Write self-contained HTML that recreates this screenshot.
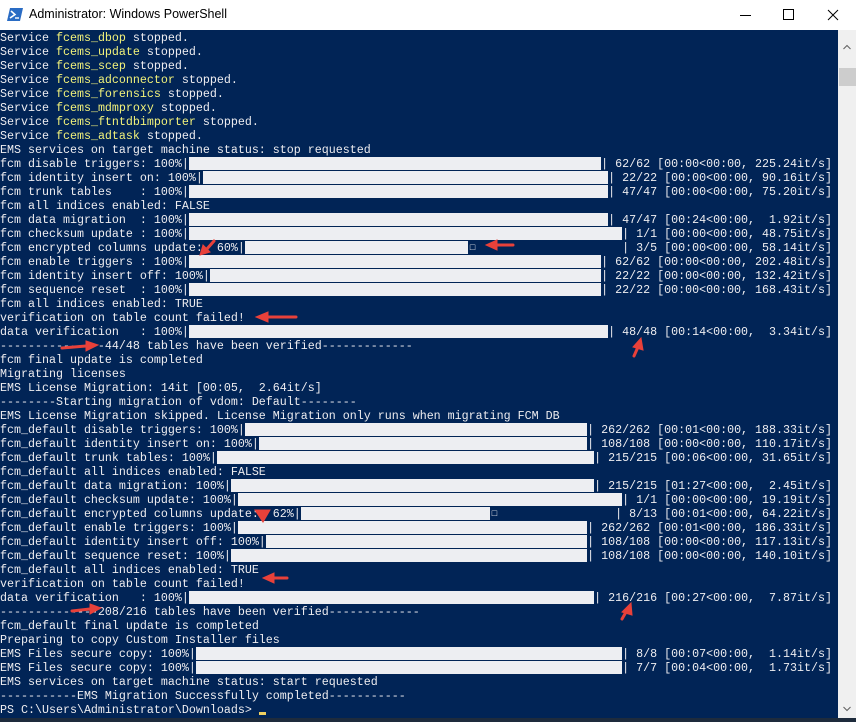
<!DOCTYPE html>
<html><head><meta charset="utf-8"><style>
*{margin:0;padding:0;box-sizing:border-box}
body{width:856px;height:722px;overflow:hidden;background:#fff;position:relative;font-family:"Liberation Mono",monospace}
.title{position:absolute;left:0;top:0;width:856px;height:30px;background:#fff;font-family:"Liberation Sans",sans-serif;font-size:12.5px;color:#000}
.title .t{position:absolute;left:29px;top:7px}
.con{position:absolute;left:0;top:30px;width:838px;height:688px;background:#012456}
.sb{position:absolute;left:838px;top:30px;width:18px;height:688px;background:#f0f0f0}
.ln{position:absolute;left:0;height:14px;width:832px;display:flex;font-size:11.67px;line-height:14px;color:#eeedf0;white-space:pre;margin-top:1px}
.y{color:#f2f27a}
.bar{flex:1;height:13px;background:#edeef2;margin-top:0}
.pbar{flex:1;height:13px;position:relative}
.pbar i{position:absolute;left:0;top:0;height:13px;background:#edeef2}
.bot{position:absolute;left:0;top:718px;width:856px;height:4px;background:#1e2b3c}
</style></head><body>
<div class="title">
<svg style="position:absolute;left:7px;top:8px" width="16" height="13" viewBox="0 0 16 13"><path d="M3 0H16L13 13H0Z" fill="#2a6cc4"/><path d="M4 3L8 6.5L3 10" stroke="#fff" stroke-width="1.6" fill="none"/><path d="M8 10H12" stroke="#fff" stroke-width="1.4"/></svg>
<span class="t">Administrator: Windows PowerShell</span>
<svg style="position:absolute;left:740px;top:8px" width="110" height="14"><path d="M0 7.5H11" stroke="#000"/><path d="M43.5 1.5H53.5V11.5H43.5Z" stroke="#000" fill="none"/><path d="M88 2L98 12M98 2L88 12" stroke="#000"/></svg>
</div>
<div class="con"></div>
<div class="sb">
<svg style="position:absolute;left:5px;top:14px" width="8" height="6"><path d="M0.5 5L4 1.5L7.5 5" stroke="#606060" fill="none"/></svg>
<div style="position:absolute;left:1px;top:38px;width:17px;height:18px;background:#cdcdcd"></div>
<svg style="position:absolute;left:5px;top:676px" width="8" height="6"><path d="M0.5 1L4 4.5L7.5 1" stroke="#606060" fill="none"/></svg>
</div>
<div class="bot"></div>

<div class="ln" style="top:30px">Service <span class="y">fcems_dbop</span> stopped.</div>
<div class="ln" style="top:44px">Service <span class="y">fcems_update</span> stopped.</div>
<div class="ln" style="top:58px">Service <span class="y">fcems_scep</span> stopped.</div>
<div class="ln" style="top:72px">Service <span class="y">fcems_adconnector</span> stopped.</div>
<div class="ln" style="top:86px">Service <span class="y">fcems_forensics</span> stopped.</div>
<div class="ln" style="top:100px">Service <span class="y">fcems_mdmproxy</span> stopped.</div>
<div class="ln" style="top:114px">Service <span class="y">fcems_ftntdbimporter</span> stopped.</div>
<div class="ln" style="top:128px">Service <span class="y">fcems_adtask</span> stopped.</div>
<div class="ln" style="top:142px">EMS services on target machine status: stop requested</div>
<div class="ln" style="top:156px"><span>fcm disable triggers: 100%|</span><div class="bar"></div><span>| 62/62 [00:00&lt;00:00, 225.24it/s]</span></div>
<div class="ln" style="top:170px"><span>fcm identity insert on: 100%|</span><div class="bar"></div><span>| 22/22 [00:00&lt;00:00, 90.16it/s]</span></div>
<div class="ln" style="top:184px"><span>fcm trunk tables    : 100%|</span><div class="bar"></div><span>| 47/47 [00:00&lt;00:00, 75.20it/s]</span></div>
<div class="ln" style="top:198px">fcm all indices enabled: FALSE</div>
<div class="ln" style="top:212px"><span>fcm data migration  : 100%|</span><div class="bar"></div><span>| 47/47 [00:24&lt;00:00,  1.92it/s]</span></div>
<div class="ln" style="top:226px"><span>fcm checksum update : 100%|</span><div class="bar"></div><span>| 1/1 [00:00&lt;00:00, 48.75it/s]</span></div>
<div class="ln" style="top:240px"><span>fcm encrypted columns update:  60%|</span><div class="pbar"><i style="width:223px"></i><span style="position:absolute;left:225px;top:0;font-size:9px">&#9633;</span></div><span>| 3/5 [00:00&lt;00:00, 58.14it/s]</span></div>
<div class="ln" style="top:254px"><span>fcm enable triggers : 100%|</span><div class="bar"></div><span>| 62/62 [00:00&lt;00:00, 202.48it/s]</span></div>
<div class="ln" style="top:268px"><span>fcm identity insert off: 100%|</span><div class="bar"></div><span>| 22/22 [00:00&lt;00:00, 132.42it/s]</span></div>
<div class="ln" style="top:282px"><span>fcm sequence reset  : 100%|</span><div class="bar"></div><span>| 22/22 [00:00&lt;00:00, 168.43it/s]</span></div>
<div class="ln" style="top:296px">fcm all indices enabled: TRUE</div>
<div class="ln" style="top:310px">verification on table count failed!</div>
<div class="ln" style="top:324px"><span>data verification   : 100%|</span><div class="bar"></div><span>| 48/48 [00:14&lt;00:00,  3.34it/s]</span></div>
<div class="ln" style="top:338px">---------------44/48 tables have been verified-------------</div>
<div class="ln" style="top:352px">fcm final update is completed</div>
<div class="ln" style="top:366px">Migrating licenses</div>
<div class="ln" style="top:380px">EMS License Migration: 14it [00:05,  2.64it/s]</div>
<div class="ln" style="top:394px">--------Starting migration of vdom: Default--------</div>
<div class="ln" style="top:408px">EMS License Migration skipped. License Migration only runs when migrating FCM DB</div>
<div class="ln" style="top:422px"><span>fcm_default disable triggers: 100%|</span><div class="bar"></div><span>| 262/262 [00:01&lt;00:00, 188.33it/s]</span></div>
<div class="ln" style="top:436px"><span>fcm_default identity insert on: 100%|</span><div class="bar"></div><span>| 108/108 [00:00&lt;00:00, 110.17it/s]</span></div>
<div class="ln" style="top:450px"><span>fcm_default trunk tables: 100%|</span><div class="bar"></div><span>| 215/215 [00:06&lt;00:00, 31.65it/s]</span></div>
<div class="ln" style="top:464px">fcm_default all indices enabled: FALSE</div>
<div class="ln" style="top:478px"><span>fcm_default data migration: 100%|</span><div class="bar"></div><span>| 215/215 [01:27&lt;00:00,  2.45it/s]</span></div>
<div class="ln" style="top:492px"><span>fcm_default checksum update: 100%|</span><div class="bar"></div><span>| 1/1 [00:00&lt;00:00, 19.19it/s]</span></div>
<div class="ln" style="top:506px"><span>fcm_default encrypted columns update:  62%|</span><div class="pbar"><i style="width:189px"></i><span style="position:absolute;left:191px;top:0;font-size:9px">&#9633;</span></div><span>| 8/13 [00:01&lt;00:00, 64.22it/s]</span></div>
<div class="ln" style="top:520px"><span>fcm_default enable triggers: 100%|</span><div class="bar"></div><span>| 262/262 [00:01&lt;00:00, 186.33it/s]</span></div>
<div class="ln" style="top:534px"><span>fcm_default identity insert off: 100%|</span><div class="bar"></div><span>| 108/108 [00:00&lt;00:00, 117.13it/s]</span></div>
<div class="ln" style="top:548px"><span>fcm_default sequence reset: 100%|</span><div class="bar"></div><span>| 108/108 [00:00&lt;00:00, 140.10it/s]</span></div>
<div class="ln" style="top:562px">fcm_default all indices enabled: TRUE</div>
<div class="ln" style="top:576px">verification on table count failed!</div>
<div class="ln" style="top:590px"><span>data verification   : 100%|</span><div class="bar"></div><span>| 216/216 [00:27&lt;00:00,  7.87it/s]</span></div>
<div class="ln" style="top:604px">--------------208/216 tables have been verified-------------</div>
<div class="ln" style="top:618px">fcm_default final update is completed</div>
<div class="ln" style="top:632px">Preparing to copy Custom Installer files</div>
<div class="ln" style="top:646px"><span>EMS Files secure copy: 100%|</span><div class="bar"></div><span>| 8/8 [00:07&lt;00:00,  1.14it/s]</span></div>
<div class="ln" style="top:660px"><span>EMS Files secure copy: 100%|</span><div class="bar"></div><span>| 7/7 [00:04&lt;00:00,  1.73it/s]</span></div>
<div class="ln" style="top:674px">EMS services on target machine status: start requested</div>
<div class="ln" style="top:688px">-----------EMS Migration Successfully completed-----------</div>
<div class="ln" style="top:702px">PS C:\Users\Administrator\Downloads&gt; <span style="display:inline-block;width:7px;height:3px;background:#f0d060;margin-top:9px"></span></div>

<svg style="position:absolute;left:0;top:0" width="856" height="722">
<g fill="#e8413a" stroke="#e8413a" stroke-linecap="round">
<path d="M214 241L206 250" stroke-width="3"/><path d="M200 255L203 245L210 252Z"/>
<path d="M513 245L496 245" stroke-width="3"/><path d="M486 245L497 240L497 250Z"/>
<path d="M296 317L268 317" stroke-width="3"/><path d="M256 317L268 312L268 322Z"/>
<path d="M634 356L638 347" stroke-width="3"/><path d="M641 338L643 350L633 347Z"/>
<path d="M62 348L86 346" stroke-width="3"/><path d="M98 345L86 341L86 351Z"/>
<path d="M258 512L262 518" stroke-width="2"/><path d="M255 510L270 510L263 522Z"/>
<path d="M287 578L274 578" stroke-width="3"/><path d="M263 578L274 573L274 583Z"/>
<path d="M622 619L626 612" stroke-width="3"/><path d="M631 603L632 615L622 612Z"/>
<path d="M72 611L90 609" stroke-width="3"/><path d="M101 608L90 604L90 614Z"/>
</g></svg>
</body></html>
